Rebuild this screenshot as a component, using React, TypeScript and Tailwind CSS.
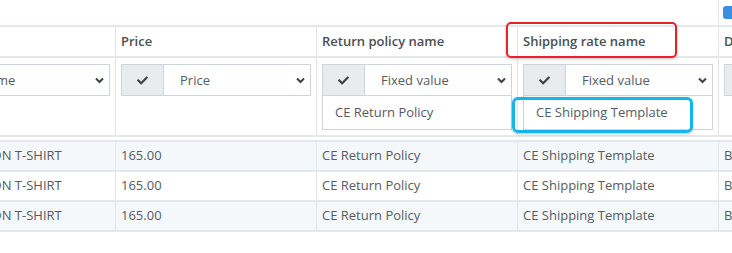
import React from 'react';

const Check = () => (
  <svg width="11" height="9" viewBox="0 64 512 384" fill="#3f4348">
    <path d="M173.898 439.404l-166.4-166.4c-9.997-9.997-9.997-26.206 0-36.204l36.203-36.204c9.997-9.998 26.207-9.998 36.204 0L192 312.69 432.095 72.596c9.997-9.997 26.207-9.997 36.204 0l36.203 36.204c9.997 9.997 9.997 26.206 0 36.204l-294.4 294.401c-9.998 9.997-26.207 9.997-36.204-.001z" />
  </svg>
);

const Chevron = () => (
  <svg width="9" height="7" viewBox="0 0 9 7" fill="none" stroke="#3f4348" strokeWidth="2">
    <polyline points="1,1.5 4.5,5 8,1.5" />
  </svg>
);

interface FilterProps {
  label: string;
  value?: string;
}

const Filter: React.FC<FilterProps> = ({ label, value }) => (
  <div className="w-[190px]">
    <div className="flex h-8 border border-[#ced4da] bg-white">
      <div className="w-[42px] shrink-0 bg-[#e9ecef] border-r border-[#ced4da] flex items-center justify-center">
        <Check />
      </div>
      <div className="flex-1 flex items-center justify-between pl-4 pr-[5px] pt-[1px] text-[13px] text-[#555b61] whitespace-nowrap overflow-hidden">
        <span>{label}</span>
        <Chevron />
      </div>
    </div>
    {value && (
      <div className="h-[34px] border-x border-b border-[#ced4da] flex items-center pl-3 pt-[1px] text-[13px] text-[#555b61] whitespace-nowrap">
        {value}
      </div>
    )}
  </div>
);

const columns = [
  { title: 'Title', filter: 'Name', value: '', body: 'BASIC COTTON T-SHIRT' },
  { title: 'Price', filter: 'Price', value: '', body: '165.00' },
  { title: 'Return policy name', filter: 'Fixed value', value: 'CE Return Policy', body: 'CE Return Policy' },
  { title: 'Shipping rate name', filter: 'Fixed value', value: 'CE Shipping Template', body: 'CE Shipping Template' },
];

const rows = [0, 1, 2];

export default function App() {
  return (
    <div className="relative w-[732px] h-[253px] overflow-hidden bg-white font-['Open_Sans',sans-serif]">
      {/* table is scrolled horizontally, first column partly hidden */}
      <div className="ml-[-85px] w-[1100px]">
        <div className="flex h-[25px]">
          <div className="w-[804px] shrink-0 border-r border-[#e1e5e9]" />
          <div className="pl-[4px] pt-[6px]">
            <div className="w-[14px] h-[13px] rounded-[3px] bg-[#3b8ee0]" />
          </div>
        </div>

        <div className="flex h-[33px] border-y-2 border-[#e4e7eb]">
          {columns.map((c) => (
            <div key={c.title} className="w-[201px] shrink-0 border-r border-[#e1e5e9] flex items-center px-[5px] pt-[1px] text-[13px] font-semibold text-[#4a4f55] whitespace-nowrap">
              {c.title}
            </div>
          ))}
          <div className="flex items-center px-[5px] pt-[1px] text-[13px] font-semibold text-[#4a4f55] whitespace-nowrap">Description</div>
        </div>

        <div className="flex border-b-2 border-[#e4e7eb]">
          {columns.map((c) => (
            <div key={c.title} className="w-[201px] shrink-0 border-r border-[#e1e5e9] px-[5px] pt-[6px] pb-[5px]">
              <Filter label={c.filter} value={c.value || undefined} />
            </div>
          ))}
          <div className="px-[5px] pt-[6px]">
            <Filter label="Fixed value" />
          </div>
        </div>

        <div className="mt-[3px] border-t-2 border-[#e4e7eb]">
          {rows.map((r) => (
            <div key={r} className={`flex h-[30px] border-b-2 border-[#e4e7eb] ${r % 2 === 0 ? 'bg-[#f5f8fb]' : 'bg-white'}`}>
              {columns.map((c) => (
                <div key={c.title} className="w-[201px] shrink-0 border-r border-[#e1e5e9] flex items-center px-[5px] text-[13px] text-[#555b61] whitespace-nowrap overflow-hidden">
                  {c.body}
                </div>
              ))}
              <div className="flex items-center px-[5px] text-[13px] text-[#555b61] whitespace-nowrap">BASIC COTTON</div>
            </div>
          ))}
        </div>
      </div>

      {/* annotations */}
      <div className="absolute left-[506px] top-[22px] w-[171px] h-[36px] border-2 border-[#e8202a] rounded-[5px] shadow-[0_1px_3px_rgba(0,0,0,0.25)]" />
      <div className="absolute left-[512px] top-[97px] w-[181px] h-[36px] border-[3px] border-[#16b4ec] rounded-[6px] shadow-[0_1px_3px_rgba(0,0,0,0.25)]" />
    </div>
  );
}
